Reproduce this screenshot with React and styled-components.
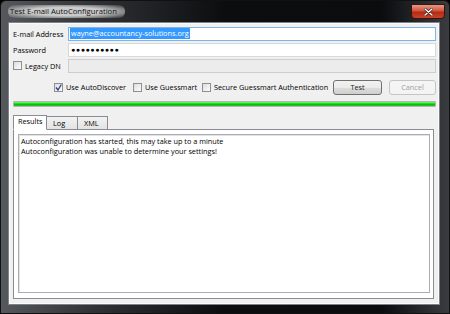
import React from "react";
import styled, { createGlobalStyle } from "styled-components";

const Global = createGlobalStyle`
  html, body { margin: 0; padding: 0; background: #000; }
  body { width: 450px; height: 314px; overflow: hidden; }
`;

const Window = styled.div`
  width: 450px;
  height: 314px;
  box-sizing: border-box;
  background: linear-gradient(90deg, #55585c 0%, #2e3033 22%, #0c0d0f 50%, #0b0c0e 85%, #3a3c40 100%);
  border: 1px solid #111;
  border-radius: 6px 6px 0 0;
  display: flex;
  flex-direction: column;
  padding: 0 9px 8px 7px;
  font-family: "Open Sans", "Noto Sans", sans-serif;
  font-size: 7.3px;
  color: #000;
`;

const TitleBar = styled.div`
  height: 21px;
  display: flex;
  align-items: flex-start;
  justify-content: space-between;
`;

const Title = styled.div`
  margin-top: 4px;
  padding: 1px 8px 1px 2px;
  font-size: 7.7px;
  line-height: 11px;
  color: #111;
  background: radial-gradient(ellipse at center, rgba(210,210,210,0.95) 45%, rgba(190,190,190,0.6) 72%, rgba(170,170,170,0) 100%);
  border-radius: 6px;
`;

const CloseButton = styled.div`
  margin-top: 3px;
  margin-right: -5px;
  width: 32px;
  height: 13px;
  border: 1px solid #3a1210;
  border-radius: 0 0 4px 4px;
  background: linear-gradient(180deg, #e49a8a 0%, #d0533b 45%, #b62a14 55%, #c5452a 100%);
  display: flex;
  align-items: center;
  justify-content: center;
`;

const Client = styled.div`
  flex: 1;
  background: #f0f0f0;
  border: 1px solid #7d8288;
  box-shadow: inset 0 0 0 1px #fbfbfb;
  display: flex;
  flex-direction: column;
  padding: 3px 3px 5px 4px;
`;

const Row = styled.div`
  display: flex;
  align-items: center;
  height: 15px;
  margin-bottom: 1px;
`;

const Label = styled.div`
  width: 55px;
  white-space: nowrap;
  display: flex;
  align-items: center;
  gap: 3px;
`;

const Input = styled.div`
  flex: 1;
  height: 14px;
  box-sizing: border-box;
  border: 1px solid ${(p) => (p.$focused ? "#7fb4e6" : p.$disabled ? "#cdcdcd" : "#d6d9de")};
  background: ${(p) => (p.$disabled ? "#ececec" : "#fff")};
  display: flex;
  align-items: center;
  padding-left: 1px;
  line-height: 11px;
`;

const Selected = styled.span`
  background: #3399ff;
  color: #fff;
  padding: 0 1px;
  font-size: 7.3px;
`;

const Dots = styled.span`
  letter-spacing: 0.6px;
  font-size: 7px;
  padding-left: 1px;
`;

const Box = styled.span`
  width: 9px;
  height: 9px;
  box-sizing: border-box;
  border: 1px solid #8f8f8f;
  background: linear-gradient(135deg, #dcdcdc, #fdfdfd);
  display: inline-flex;
  align-items: center;
  justify-content: center;
  flex: none;
`;

const OptionsRow = styled.div`
  display: flex;
  align-items: center;
  height: 16px;
  margin-top: 5px;
  padding-left: 41px;
`;

const Option = styled.label`
  display: flex;
  align-items: center;
  gap: 3px;
  width: ${(p) => p.$w}px;
  white-space: nowrap;
`;

const Button = styled.div`
  width: ${(p) => p.$w}px;
  height: 15px;
  box-sizing: border-box;
  border: 1px solid ${(p) => (p.$disabled ? "#c4c4c4" : "#707070")};
  border-radius: 3px;
  background: ${(p) =>
    p.$disabled ? "#f4f4f4" : "linear-gradient(180deg, #f2f2f2 0%, #ebebeb 50%, #dddddd 51%, #cfcfcf 100%)"};
  color: ${(p) => (p.$disabled ? "#a0a0a0" : "#1a1a1a")};
  display: flex;
  align-items: center;
  justify-content: center;
  margin-left: ${(p) => p.$ml}px;
`;

const Progress = styled.div`
  margin: 6px 0 0 0;
  height: 6px;
  box-sizing: border-box;
  border: 1px solid #b4b4b4;
  background: linear-gradient(180deg, #8ef08e 0%, #1ed81e 40%, #06c106 60%, #27c827 100%);
  border-radius: 1px;
`;

const Tabs = styled.div`
  display: flex;
  margin-top: 7px;
  height: 15px;
  align-items: flex-end;
  position: relative;
  z-index: 1;
`;

const Tab = styled.div`
  width: ${(p) => p.$w}px;
  height: ${(p) => (p.$active ? 15 : 13)}px;
  box-sizing: border-box;
  border: 1px solid #898c95;
  border-bottom: ${(p) => (p.$active ? "1px solid #fff" : "none")};
  border-left: ${(p) => (p.$first || p.$active ? "1px solid #898c95" : "none")};
  background: ${(p) => (p.$active ? "#fff" : "linear-gradient(180deg, #f2f2f2, #e3e3e3)")};
  padding-left: ${(p) => (p.$active ? 4 : 6)}px;
  line-height: ${(p) => (p.$active ? 11 : 13)}px;
  margin-bottom: ${(p) => (p.$active ? -1 : 0)}px;
`;

const Panel = styled.div`
  flex: 1;
  border: 1px solid #898c95;
  background: #fff;
  margin-right: 2px;
  padding: 4px 3px 5px 4px;
  display: flex;
`;

const Output = styled.div`
  flex: 1;
  border: 1px solid #abadb3;
  box-shadow: 1px 1px 0 #e3e3e3 inset;
  padding: 1px 2px;
  font-size: 7.3px;
  line-height: 10px;
  color: #000;
`;

const Check = () => (
  <svg width="7" height="7" viewBox="0 0 7 7">
    <path d="M1 3.5 L3 6 L6.3 0.5" fill="none" stroke="#2a3f8f" strokeWidth="1.3" />
  </svg>
);

const CloseX = () => (
  <svg width="9" height="8" viewBox="0 0 9 8">
    <path d="M1 1 L8 7 M8 1 L1 7" stroke="#3a1a14" strokeWidth="2.6" strokeLinecap="round" />
    <path d="M1 1 L8 7 M8 1 L1 7" stroke="#fff" strokeWidth="1.4" strokeLinecap="round" />
  </svg>
);

export default function App() {
  return (
    <>
      <Global />
      <Window>
        <TitleBar>
          <Title>Test E-mail AutoConfiguration</Title>
          <CloseButton>
            <CloseX />
          </CloseButton>
        </TitleBar>
        <Client>
          <Row>
            <Label>E-mail Address</Label>
            <Input $focused>
              <Selected>wayne@accountancy-solutions.org</Selected>
            </Input>
          </Row>
          <Row>
            <Label>Password</Label>
            <Input>
              <Dots>●●●●●●●●●●</Dots>
            </Input>
          </Row>
          <Row>
            <Label>
              <Box />
              Legacy DN
            </Label>
            <Input $disabled />
          </Row>
          <OptionsRow>
            <Option $w={79}>
              <Box>
                <Check />
              </Box>
              Use AutoDiscover
            </Option>
            <Option $w={69}>
              <Box />
              Use Guessmart
            </Option>
            <Option $w={131}>
              <Box />
              Secure Guessmart Authentication
            </Option>
            <Button $w={49} $ml={0}>Test</Button>
            <Button $w={47} $ml={7} $disabled>
              Cancel
            </Button>
          </OptionsRow>
          <Progress />
          <Tabs>
            <Tab $w={34} $active $first>
              Results
            </Tab>
            <Tab $w={31}>Log</Tab>
            <Tab $w={30}>XML</Tab>
          </Tabs>
          <Panel>
            <Output>
              Autoconfiguration has started, this may take up to a minute
              <br />
              Autoconfiguration was unable to determine your settings!
            </Output>
          </Panel>
        </Client>
      </Window>
    </>
  );
}
